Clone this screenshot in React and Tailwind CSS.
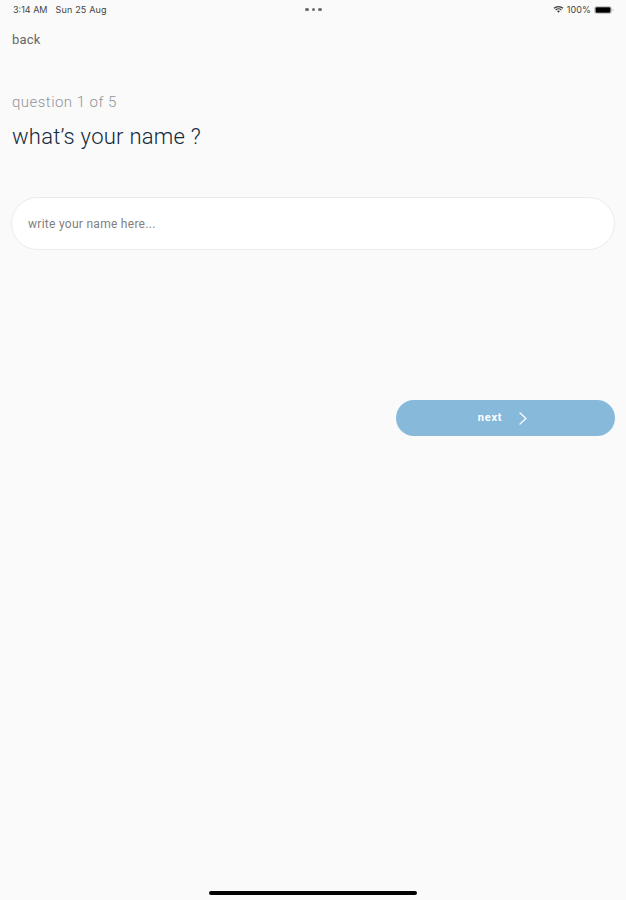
import { useState } from "react";

const StatusBar = () => {
    return (
        <header className="grid h-[19px] grid-cols-3 items-center pl-[13px] pr-3 font-['Inter',sans-serif] text-[9px] leading-none text-[#444]">
            <div className="flex gap-[8px] whitespace-nowrap">
                <span>3:14 AM</span>
                <span className="tracking-[0.18px]">Sun 25 Aug</span>
            </div>

            <div className="flex justify-center gap-[3px]">
                <span className="size-[3.5px] rounded-full bg-[#6b6b6b]" />
                <span className="size-[3.5px] rounded-full bg-[#6b6b6b]" />
                <span className="size-[3.5px] rounded-full bg-[#6b6b6b]" />
            </div>

            <div className="flex items-center justify-end">
                <svg className="h-[7px] w-[11px]" viewBox="0 0 10 7" fill="none" stroke="#3a3a3a">
                    <path d="M0.5 2.3C3 0.1 7 0.1 9.5 2.3" strokeWidth="1.2" />
                    <path d="M2.1 4C3.7 2.6 6.3 2.6 7.9 4" strokeWidth="1.1" />
                    <path d="M3.5 5.1C4.4 4.4 5.6 4.4 6.5 5.1L5 6.7Z" fill="#3a3a3a" stroke="none" />
                </svg>
                <span className="ml-[3px] tracking-[0.1px]">100%</span>
                <svg className="ml-[3px] h-[8px] w-[20px]" viewBox="0 0 20 8">
                    <rect x="0.5" y="0.5" width="17" height="7" rx="2" fill="none" stroke="#bdbdbd" strokeWidth="0.8" />
                    <rect x="1.5" y="1.3" width="15" height="5.4" rx="1" fill="#000" />
                    <path d="M18.6 2.8C19.8 3.3 19.8 4.7 18.6 5.2Z" fill="#aaa" />
                </svg>
            </div>
        </header>
    );
};

const App = () => {

    const [name, setName] = useState("");

    return (
        <main className="flex h-[900px] w-full flex-col bg-[#fafafa] font-['Roboto',sans-serif]">
            <StatusBar />

            <form className="flex flex-1 flex-col pl-3 pr-[11px]" onSubmit={e => e.preventDefault()}>

                <button type="button" className="mt-[13px] h-4 self-start text-[13px] leading-4 tracking-[0.2px] text-[#666]">
                    back
                </button>

                <p className="mt-[44px] text-[15px] leading-5 font-light tracking-[0.47px] text-[#8f9599]">
                    question 1 of 5
                </p>

                <h1 className="mt-[11px] text-[22px] leading-7 font-light tracking-[0.26px] text-[#12293a]">
                    what’s your name ?
                </h1>

                <input
                    type="text"
                    value={name}
                    onChange={e => setName(e.target.value)}
                    placeholder="write your name here..."
                    className="mt-[46px] -ml-px h-[53px] rounded-full border border-[#ebebeb] bg-white px-4 text-[12px] tracking-[0.28px] text-[#12293a] outline-none placeholder:text-[#808080]"
                />

                <button
                    type="submit"
                    className="mt-[150px] flex h-9 w-[219px] items-center justify-center gap-[17px] self-end rounded-full bg-[#86b9da] pr-[6px] text-[11px] font-bold tracking-[0.8px] text-white"
                >
                    <span className="pt-px">next</span>
                    <svg className="h-[13px] w-[8px]" viewBox="0 0 8 13" fill="none" stroke="currentColor" strokeWidth="1.2" strokeLinecap="round" strokeLinejoin="round">
                        <path d="M1 1L7 6.5L1 12" />
                    </svg>
                </button>

            </form>

            {/* Home indicator */}
            <div className="mb-[5px] h-1 w-[208px] self-center rounded-full bg-black" />
        </main>
    );
};

export default App;
